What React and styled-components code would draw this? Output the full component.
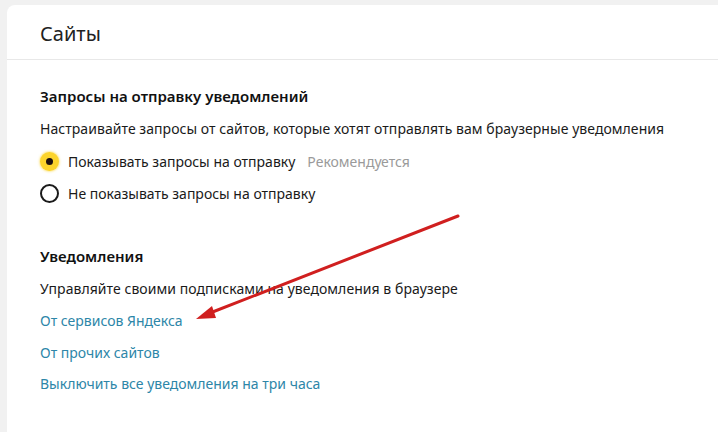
import React from "react";
import styled, { createGlobalStyle } from "styled-components";

const Global = createGlobalStyle`
  html, body { margin: 0; padding: 0; background: #f1f1f1; }
  body { font-family: "Noto Sans", "Open Sans", sans-serif; }
`;

const Page = styled.div`
  position: relative;
  width: 718px;
  height: 432px;
  overflow: hidden;
  padding: 5px 0 0 7px;
  box-sizing: border-box;
`;

const Card = styled.div`
  background: #fff;
  border-top-left-radius: 8px;
  height: 100%;
  box-sizing: border-box;
`;

const Header = styled.div`
  height: 55px;
  display: flex;
  align-items: center;
  padding: 2px 0 0 33px;
  box-sizing: border-box;
  border-bottom: 1px solid #e8e8e8;
  font-size: 20px;
  color: #222;
`;

const Body = styled.div`
  padding: 20px 0 0 33px;
`;

const Section = styled.div`
  display: flex;
  flex-direction: column;
  margin-bottom: ${(p) => p.$mb || 0}px;
`;

const Title = styled.div`
  font-size: 15px;
  font-weight: 600;
  color: #111;
  height: 33px;
  line-height: 32px;
`;

const Line = styled.div`
  font-size: 14px;
  color: #1a1a1a;
  height: 32px;
  line-height: 32px;
  letter-spacing: 0.05px;
`;

const RadioRow = styled.div`
  display: flex;
  align-items: center;
  height: 32px;
  gap: 9px;
  font-size: 14px;
  color: #1a1a1a;
`;

const Radio = styled.span`
  width: 19px;
  height: 19px;
  border-radius: 50%;
  box-sizing: border-box;
  display: flex;
  align-items: center;
  justify-content: center;
  background: ${(p) => (p.$on ? "#fcd42c" : "#fff")};
  border: ${(p) => (p.$on ? "none" : "2px solid #1a1a1a")};
  box-shadow: ${(p) => (p.$on ? "0 0 2px 1px rgba(252,212,44,0.5)" : "none")};
  &::after {
    content: "";
    display: ${(p) => (p.$on ? "block" : "none")};
    width: 7px;
    height: 7px;
    border-radius: 50%;
    background: #1c1010;
  }
`;

const Hint = styled.span`
  color: #9a9a9a;
  margin-left: 12px;
`;

const Link = styled.a`
  font-size: 14px;
  color: #2d86a8;
  height: 31.5px;
  line-height: 31.5px;
  text-decoration: none;
  align-self: flex-start;
`;

const Arrow = styled.svg`
  position: absolute;
  left: 0;
  top: 0;
  pointer-events: none;
`;

export default function App() {
  return (
    <>
      <Global />
      <Page>
        <Card>
          <Header>Сайты</Header>
          <Body>
            <Section $mb={31}>
              <Title>Запросы на отправку уведомлений</Title>
              <Line>Настраивайте запросы от сайтов, которые хотят отправлять вам браузерные уведомления</Line>
              <RadioRow>
                <Radio $on />
                <span>
                  Показывать запросы на отправку<Hint>Рекомендуется</Hint>
                </span>
              </RadioRow>
              <RadioRow>
                <Radio />
                <span>Не показывать запросы на отправку</span>
              </RadioRow>
            </Section>
            <Section>
              <Title>Уведомления</Title>
              <Line>Управляйте своими подписками на уведомления в браузере</Line>
              <Link href="#">От сервисов Яндекса</Link>
              <Link href="#">От прочих сайтов</Link>
              <Link href="#">Выключить все уведомления на три часа</Link>
            </Section>
          </Body>
        </Card>
        <Arrow width="718" height="432" viewBox="0 0 718 432">
          <line x1="458" y1="216" x2="210" y2="313" stroke="#d01f1f" strokeWidth="3" strokeLinecap="round" />
          <polygon points="196,319 212,306 216,318" fill="#d01f1f" />
        </Arrow>
      </Page>
    </>
  );
}
